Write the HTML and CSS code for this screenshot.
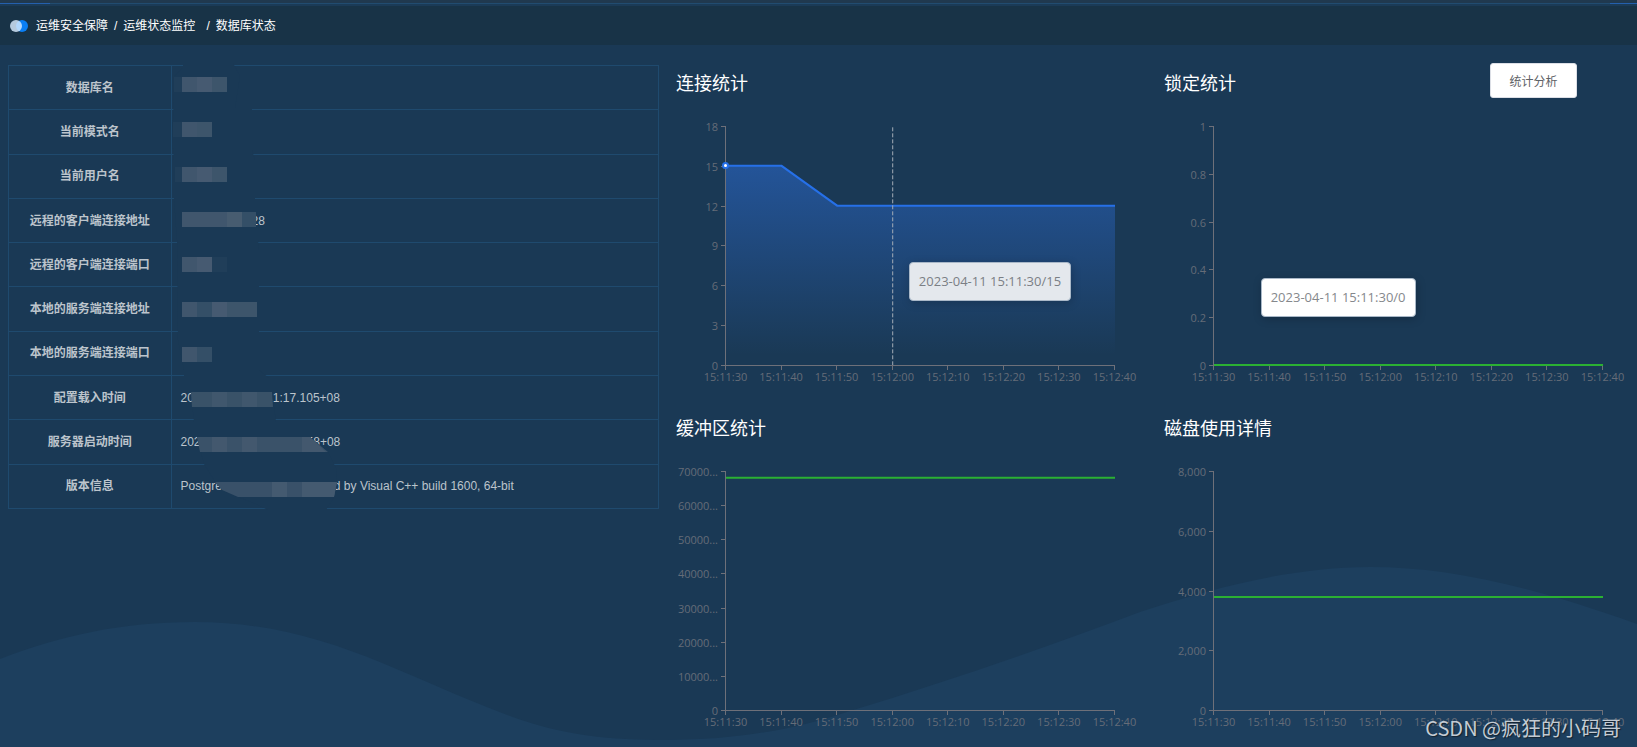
FILE: index.html
```html
<!DOCTYPE html>
<html lang="zh-CN">
<head>
<meta charset="utf-8">
<meta name="viewport" content="width=device-width, initial-scale=1">
<title>数据库状态</title>
<link rel="stylesheet" href="styles.css">
</head>
<body>
<svg class="wave" viewBox="0 0 1637 747" preserveAspectRatio="none" aria-hidden="true">
  <path d="M0 659C60 636 120 622 195 622C320 622 400 675 502 713C560 736 610 740 666 740C740 740 800 728 850 711C950 681 1050 646 1140 612C1210 589 1290 567 1370 567C1450 567 1530 586 1637 624V747H0Z"/>
</svg>

<div class="top-strip"></div>
<header class="header">
  <svg class="logo" width="18" height="12" viewBox="0 0 18 12" aria-hidden="true">
    <circle cx="12" cy="6" r="6" fill="#0a7ff5"/>
    <circle cx="6" cy="6" r="6" fill="#d8ebff" fill-opacity=".82"/>
  </svg>
  <nav class="crumbs" aria-label="breadcrumb">
    <span>运维安全保障</span><span>/</span><span>运维状态监控</span><span class="last-sep">/</span><span>数据库状态</span>
  </nav>
</header>

<main class="main">
  <section class="info">
    <table class="info-table">
      <tbody>
        <tr><th scope="row">数据库名</th><td></td></tr>
        <tr><th scope="row">当前模式名</th><td></td></tr>
        <tr><th scope="row">当前用户名</th><td></td></tr>
        <tr><th scope="row">远程的客户端连接地址</th><td><span class="hidden-part part-address"></span>28</td></tr>
        <tr><th scope="row">远程的客户端连接端口</th><td></td></tr>
        <tr><th scope="row">本地的服务端连接地址</th><td></td></tr>
        <tr><th scope="row">本地的服务端连接端口</th><td></td></tr>
        <tr><th scope="row">配置载入时间</th><td>20<span class="hidden-part part-load"></span>1:17.105+08</td></tr>
        <tr><th scope="row">服务器启动时间</th><td>202<span class="hidden-part part-start"></span>58+08</td></tr>
        <tr><th scope="row">版本信息</th><td>Postgre<span class="hidden-part part-version"></span>d by Visual C++ build 1600, 64-bit</td></tr>
      </tbody>
    </table>
    <svg class="mask" width="340" height="450" viewBox="8 65 340 450" aria-hidden="true">
      <g fill="#1a3955">
        <path d="M183 63H233L240 76L235 108H252V150L255 160V226H258V240L259 250V370L269 378V382H184V370L178 340L177 240L174 200V160L172 137L173 120L174 90L174 76L183 68Z"/>
        <path d="M191 392H272L276 422H194Z"/>
        <path d="M197 437H310L328 452L336 468L337 484L334 497L326 510H268L256 504L238 497L222 490L214 480L204 464Z"/>
      </g>
      <path fill="#203e59" d="M174 77h8v15h-8zM173 122h9v15h-9zM175 167h7v15h-7z"/>
      <path fill="#40566d" d="M182 77h15v15h-15zM182 122h15v15h-15zM182 167h15v15h-15zM182 212h45v15h-45zM182 257h15v15h-15zM182 302h15v15h-15zM182 347h15v15h-15z"/>
      <path fill="#465a71" d="M197 77h15v15h-15zM197 167h15v15h-15zM197 257h15v15h-15zM212 302h15v15h-15zM235 212h7v15h-7z"/>
      <path fill="#3d556b" d="M212 77h15v15h-15zM197 122h15v15h-15zM212 167h15v15h-15zM227 302h30v15h-30z"/>
      <path fill="#344f67" d="M197 302h15v15h-15zM197 347h15v15h-15zM242 212h14v15h-14z"/>
      <path fill="#475c70" d="M227 212h15v15h-15z"/>
      <path fill="#203e59" d="M212 257h15v15h-15z"/>
      <path fill="#395268" d="M191 392H272L273 407H192Z"/>
      <path fill="#40576d" d="M212 392h15v15h-15zM242 392h15v15h-15z"/>
      <path fill="#3a5269" d="M197 437H310L328 452H200Z"/>
      <path fill="#43586e" d="M212 437h15v15h-15zM242 437h15v15h-15zM302 437H310L326 452H302Z"/>
      <path fill="#395169" d="M215 482H337L334 497H238L222 490Z"/>
      <path fill="#445a70" d="M272 482h15v15h-15zM302 482h15v15h-15zM317 482H337L334 497H317Z"/>
    </svg>
  </section>

  <div class="charts">
    <section class="panel">
      <div class="panel-head"><h2>连接统计</h2></div>
      <div class="chart">
        <ul class="y-axis"><li>18</li><li>15</li><li>12</li><li>9</li><li>6</li><li>3</li><li>0</li></ul>
        <div class="plot">
          <svg viewBox="0 0 7 18" preserveAspectRatio="none">
            <defs>
              <linearGradient id="area" x1="0" y1="0" x2="0" y2="1">
                <stop offset="0" stop-color="#2f74e8" stop-opacity=".46"/>
                <stop offset=".95" stop-color="#2f74e8" stop-opacity="0"/>
              </linearGradient>
            </defs>
            <path d="M0 3H1L2 6H7V18H0Z" fill="url(#area)"/>
            <path class="line blue" d="M0 3H1L2 6H7"/>
            <path class="cross" d="M3 .1V18"/>
          </svg>
          <i class="dot"></i>
          <div class="tip tip-connect" role="tooltip">2023-04-11 15:11:30/15</div>
        </div>
        <ul class="x-axis"><li>15:11:30</li><li>15:11:40</li><li>15:11:50</li><li>15:12:00</li><li>15:12:10</li><li>15:12:20</li><li>15:12:30</li><li>15:12:40</li></ul>
      </div>
    </section>

    <section class="panel">
      <div class="panel-head"><h2>锁定统计</h2><button type="button" class="btn">统计分析</button></div>
      <div class="chart">
        <ul class="y-axis"><li>1</li><li>0.8</li><li>0.6</li><li>0.4</li><li>0.2</li><li>0</li></ul>
        <div class="plot">
          <svg viewBox="0 0 7 10" preserveAspectRatio="none"><path class="line green" d="M0 10H7"/></svg>
          <div class="tip tip-lock" role="tooltip">2023-04-11 15:11:30/0</div>
        </div>
        <ul class="x-axis"><li>15:11:30</li><li>15:11:40</li><li>15:11:50</li><li>15:12:00</li><li>15:12:10</li><li>15:12:20</li><li>15:12:30</li><li>15:12:40</li></ul>
      </div>
    </section>

    <section class="panel">
      <div class="panel-head"><h2>缓冲区统计</h2></div>
      <div class="chart">
        <ul class="y-axis"><li>70000...</li><li>60000...</li><li>50000...</li><li>40000...</li><li>30000...</li><li>20000...</li><li>10000...</li><li>0</li></ul>
        <div class="plot">
          <svg viewBox="0 0 7 700" preserveAspectRatio="none"><path class="line green" d="M0 20H7"/></svg>
        </div>
        <ul class="x-axis"><li>15:11:30</li><li>15:11:40</li><li>15:11:50</li><li>15:12:00</li><li>15:12:10</li><li>15:12:20</li><li>15:12:30</li><li>15:12:40</li></ul>
      </div>
    </section>

    <section class="panel">
      <div class="panel-head"><h2>磁盘使用详情</h2></div>
      <div class="chart">
        <ul class="y-axis"><li>8,000</li><li>6,000</li><li>4,000</li><li>2,000</li><li>0</li></ul>
        <div class="plot">
          <svg viewBox="0 0 7 800" preserveAspectRatio="none"><path class="line green" d="M0 422H7"/></svg>
        </div>
        <ul class="x-axis"><li>15:11:30</li><li>15:11:40</li><li>15:11:50</li><li>15:12:00</li><li>15:12:10</li><li>15:12:20</li><li>15:12:30</li><li>15:12:40</li></ul>
      </div>
    </section>
  </div>
</main>
<div class="watermark">CSDN @疯狂的小码哥</div>
</body>
</html>
```
FILE: styles.css
```css
* {
  box-sizing: border-box;
}

body {
  position: relative;
  min-height: 100vh;
  margin: 0;
  background: #1a3955;
  color: #fff;
  font-family: "Liberation Sans", "Noto Sans CJK SC", sans-serif;
  font-size: 12px;
}

ul {
  margin: 0;
  padding: 0;
  list-style: none;
}

.wave {
  position: absolute;
  inset: 0;
  z-index: -1;
  width: 100%;
  height: 100%;
  fill: #1d3f5e;
}

.top-strip {
  height: 6px;
  background:
    linear-gradient(#2460ad, #2460ad) 0 3px / 50px 1px no-repeat,
    linear-gradient(#2460ad, #2460ad) 100% 3px / 27px 1px no-repeat,
    linear-gradient(#20394f 3px, #214c70 3px, #214c70 4px, #1b3b57 4px);
}

.header {
  display: flex;
  align-items: center;
  gap: 8px;
  height: 39px;
  padding-left: 10px;
  background: #183347;
}

.crumbs {
  display: flex;
  gap: 6px;
  line-height: 20px;
}

.last-sep {
  margin-left: 5px;
}

.main {
  display: grid;
  grid-template-columns: 651fr 927fr;
  gap: 17px;
  align-items: start;
  padding: 18px 34px 8px 8px;
}

.info {
  position: relative;
  margin-top: 2px;
}

.info-table {
  width: 100%;
  height: 444px;
  table-layout: fixed;
  border-collapse: collapse;
  color: #bcc4cc;
}

.info-table th,
.info-table td {
  padding: 0 9px;
  border: 1px solid #1f4a6e;
  line-height: 20px;
}

.info-table th {
  width: 25%;
  padding: 0;
  font-weight: 700;
}

.hidden-part {
  display: inline-block;
}

.part-address {
  width: 71px;
}

.part-load {
  width: 79px;
}

.part-start {
  width: 106px;
}

.part-version {
  width: 112px;
}

.mask {
  position: absolute;
  top: 0;
  left: 0;
  overflow: visible;
}

.charts {
  display: grid;
  grid-template-columns: 1fr 1fr;
  gap: 18px 49px;
}

.panel-head {
  display: flex;
  align-items: flex-start;
  justify-content: space-between;
  height: 42px;
}

.panel-head h2 {
  margin: 0;
  font-size: 18px;
  font-weight: 400;
  line-height: 42px;
}

.btn {
  width: 87px;
  height: 35px;
  margin-right: 26px;
  padding: 0;
  border: 1px solid #dcdfe6;
  border-radius: 3px;
  background: #fff;
  color: #606266;
  font: inherit;
}

.chart {
  display: grid;
  grid-template-columns: 49px 1fr;
  grid-template-rows: 240px 23px;
  margin-top: 21px;
  padding-bottom: 1px;
  color: #656c78;
  font-family: "Open Sans", sans-serif;
  font-size: 11px;
}

.y-axis,
.x-axis {
  display: flex;
  justify-content: space-between;
}

.y-axis {
  flex-direction: column;
}

.y-axis li {
  display: flex;
  align-items: center;
  justify-content: flex-end;
  gap: 3px;
  height: 1px;
}

.y-axis li::after {
  width: 4px;
  height: 1px;
  background: #6e7079;
  content: "";
}

.plot {
  position: relative;
  border: solid #6e7079;
  border-width: 0 0 1px 1px;
}

.plot svg {
  display: block;
  width: 100%;
  height: 239px;
  overflow: visible;
}

.line {
  fill: none;
  stroke-width: 2px;
  vector-effect: non-scaling-stroke;
}

.blue {
  stroke: #2670e8;
}

.green {
  stroke: #2bb033;
}

.cross {
  fill: none;
  stroke: #a4adb7;
  stroke-dasharray: 4 2;
  stroke-width: 1px;
  vector-effect: non-scaling-stroke;
}

.dot {
  position: absolute;
  top: 36px;
  left: -4px;
  width: 7px;
  height: 7px;
  border: 2px solid #2670e8;
  border-radius: 50%;
  background: #fff;
}

.tip {
  position: absolute;
  padding: 9px;
  border: 1px solid #a9b8c8;
  border-radius: 4px;
  background: #fff;
  box-shadow: 1px 2px 10px rgba(0, 0, 0, .2);
  color: #85888c;
  font-size: 13px;
  line-height: 19px;
  white-space: nowrap;
}

.tip-connect {
  top: 136px;
  left: 47%;
  background: #e4e8ed;
  color: #7b7f85;
}

.tip-lock {
  top: 152px;
  left: 12%;
}

.x-axis {
  grid-column: 2;
}

.x-axis li {
  display: flex;
  flex-direction: column;
  align-items: center;
  width: 1px;
  line-height: 14px;
  white-space: nowrap;
}

.x-axis li::before {
  width: 1px;
  height: 4px;
  background: #6e7079;
  content: "";
}

.watermark {
  position: absolute;
  right: 16px;
  bottom: 4px;
  color: #c3cbd3;
  font-family: "Noto Sans CJK SC", sans-serif;
  font-size: 20px;
  line-height: 30px;
  text-shadow: 1px 1px 1px #14222f;
}
```
